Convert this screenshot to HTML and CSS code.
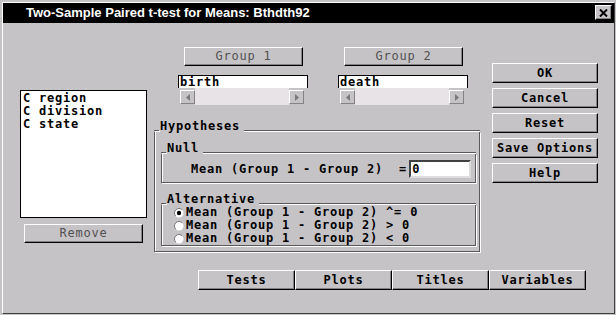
FILE: index.html
```html
<!DOCTYPE html>
<html>
<head>
<meta charset="utf-8">
<title>Two-Sample Paired t-test for Means: Bthdth92</title>
<link rel="stylesheet" href="styles.css">
</head>
<body>
<div class="window">
  <div class="frame">
    <div class="titlebar">
      <span class="title">Two-Sample Paired t-test for Means: Bthdth92</span>
      <span class="close"><svg width="9" height="8" viewBox="0 0 9 8"><path d="M1 0.5 L8 7.5 M8 0.5 L1 7.5" stroke="#000" stroke-width="2"/></svg></span>
    </div>
    <div class="content">
      <div class="main">
        <div class="leftcol">
          <div class="listbox">
            <div class="item">C region</div>
            <div class="item">C division</div>
            <div class="item">C state</div>
          </div>
          <div class="btn disabled remove">Remove</div>
        </div>

        <div class="midcol">
          <div class="pickers">
            <div class="picker">
              <div class="btn disabled groupbtn">Group 1</div>
              <div class="field">birth</div>
              <div class="hscroll">
                <span class="sarrow"><svg width="4" height="7" viewBox="0 0 4 7"><path d="M4 0 L0 3.5 L4 7Z" fill="#7b797b"/></svg></span>
                <span class="track"></span>
                <span class="sarrow"><svg width="4" height="7" viewBox="0 0 4 7"><path d="M0 0 L4 3.5 L0 7Z" fill="#7b797b"/></svg></span>
              </div>
            </div>
            <div class="picker">
              <div class="btn disabled groupbtn">Group 2</div>
              <div class="field">death</div>
              <div class="hscroll">
                <span class="sarrow"><svg width="4" height="7" viewBox="0 0 4 7"><path d="M4 0 L0 3.5 L4 7Z" fill="#7b797b"/></svg></span>
                <span class="track"></span>
                <span class="sarrow"><svg width="4" height="7" viewBox="0 0 4 7"><path d="M0 0 L4 3.5 L0 7Z" fill="#7b797b"/></svg></span>
              </div>
            </div>
          </div>

          <div class="group hyp">
            <div class="ghead"><span class="glabel">Hypotheses</span></div>
            <div class="gbody hyp-body">
              <div class="group sub null">
                <div class="ghead"><span class="glabel">Null</span></div>
                <div class="gbody null-body">
                  <span class="nulltext">Mean (Group 1 - Group 2)  =</span>
                  <span class="nullinput">0</span>
                </div>
              </div>
              <div class="group sub alt">
                <div class="ghead"><span class="glabel">Alternative</span></div>
                <div class="gbody alt-body">
                  <div class="radio-row">
                    <svg class="radio" width="10" height="10" viewBox="0 0 10 10"><circle cx="5" cy="5" r="4.5" fill="#fff"/><path d="M1.8 8.2 A4.5 4.5 0 0 1 8.2 1.8" stroke="#7b797b" fill="none"/><circle cx="5" cy="5" r="2.2" fill="#000"/></svg>
                    <span>Mean (Group 1 - Group 2) ^= 0</span>
                  </div>
                  <div class="radio-row">
                    <svg class="radio" width="10" height="10" viewBox="0 0 10 10"><circle cx="5" cy="5" r="4.5" fill="#fff"/><path d="M1.8 8.2 A4.5 4.5 0 0 1 8.2 1.8" stroke="#7b797b" fill="none"/></svg>
                    <span>Mean (Group 1 - Group 2) &gt; 0</span>
                  </div>
                  <div class="radio-row">
                    <svg class="radio" width="10" height="10" viewBox="0 0 10 10"><circle cx="5" cy="5" r="4.5" fill="#fff"/><path d="M1.8 8.2 A4.5 4.5 0 0 1 8.2 1.8" stroke="#7b797b" fill="none"/></svg>
                    <span>Mean (Group 1 - Group 2) &lt; 0</span>
                  </div>
                </div>
              </div>
            </div>
          </div>
        </div>

        <div class="rightcol">
          <div class="btn">OK</div>
          <div class="btn">Cancel</div>
          <div class="btn">Reset</div>
          <div class="btn">Save Options</div>
          <div class="btn">Help</div>
        </div>
      </div>

      <div class="bottombar">
        <div class="btn">Tests</div>
        <div class="btn">Plots</div>
        <div class="btn">Titles</div>
        <div class="btn">Variables</div>
      </div>
    </div>
  </div>
</div>
</body>
</html>
```

FILE: styles.css
```css
html, body {
  margin: 0;
  padding: 0;
  background: #c6c3c6;
}

.window {
  width: 616px;
  height: 315px;
  box-sizing: border-box;
  padding: 2px 1px 1px 2px;
  background: #c6c3c6;
  display: flex;
}

.frame {
  flex: 1;
  display: flex;
  flex-direction: column;
  border-top: 1px solid #ffffff;
  border-left: 1px solid #ffffff;
  border-right: 1px solid #424142;
  border-bottom: 1px solid #424142;
}

.titlebar {
  height: 20px;
  flex: none;
  background: #000;
  color: #fff;
  display: flex;
  align-items: flex-start;
  justify-content: space-between;
}

.title {
  margin-left: 23px;
  font: bold 13px/20px "Liberation Sans Narrow", "Liberation Sans", sans-serif;
  white-space: pre;
}

.close {
  width: 17px;
  height: 15px;
  margin: 2px 2px 0 0;
  box-sizing: border-box;
  background: #c6c3c6;
  border: 1px solid;
  border-color: #fff #000 #000 #fff;
  box-shadow: inset -1px -1px 0 #848284;
  display: flex;
  align-items: center;
  justify-content: center;
}

.content {
  flex: 1;
  display: flex;
  flex-direction: column;
  font: bold 12px/13px "DejaVu Sans Mono", monospace;
  letter-spacing: 0.78px;
  color: #000;
}

.main {
  display: flex;
  align-items: flex-start;
}

/* generic 3D button */
.btn {
  box-sizing: border-box;
  height: 20px;
  background: #c6c3c6;
  border-top: 1px solid #ffffff;
  border-left: 1px solid #ffffff;
  border-right: 1px solid #000;
  border-bottom: 1px solid #000;
  box-shadow: inset -1px -1px 0 #848284;
  display: flex;
  align-items: center;
  justify-content: center;
  white-space: pre;
}

.btn.disabled {
  color: #525152;
  font-weight: normal;
}

/* left column */
.leftcol {
  width: 127px;
  margin-left: 17px;
  display: flex;
  flex-direction: column;
}

.listbox {
  margin-top: 67px;
  height: 128px;
  box-sizing: border-box;
  background: #fff;
  border: 1px solid #000;
  padding: 1px 2px;
}

.item {
  height: 13px;
  white-space: pre;
}

.remove {
  margin: 6px 0 0 4px;
  width: 119px;
  height: 19px;
}

/* middle column */
.midcol {
  width: 326px;
  margin-left: 7px;
  display: flex;
  flex-direction: column;
}

.pickers {
  display: flex;
  gap: 30px;
  margin-top: 24px;
  padding-left: 24px;
}

.picker {
  width: 130px;
  display: flex;
  flex-direction: column;
}

.groupbtn {
  margin-left: 6px;
  width: 119px;
  height: 19px;
}

.field {
  margin-top: 9px;
  height: 13px;
  box-sizing: border-box;
  background: #fff;
  border: 1px solid #000;
  border-bottom: none;
  padding-left: 1px;
  line-height: 12px;
}

.hscroll {
  height: 17px;
  box-sizing: border-box;
  padding: 2px 4px 1px 2px;
  display: flex;
  align-items: stretch;
  background: #c6c3c6;
}

.sarrow {
  width: 15px;
  box-sizing: border-box;
  background: #c6c3c6;
  border-top: 1px solid #fff;
  border-left: 1px solid #fff;
  border-right: 1px solid #848284;
  border-bottom: 1px solid #848284;
  display: flex;
  align-items: center;
  justify-content: center;
}

.track {
  flex: 1;
  background: #e7e3e7;
  margin: -2px 0 -1px 0;
}

/* group frames */
.group {
  display: flex;
  flex-direction: column;
}

.hyp {
  margin-top: 15px;
}

.ghead {
  height: 12px;
  display: flex;
  align-items: flex-end;
}

.ghead::before {
  content: "";
  width: 5px;
  height: 1px;
  margin-bottom: 1px;
  background: #5a595a;
  box-shadow: 1px 1px 0 #fff;
  margin-right: 1px;
}

.ghead::after {
  content: "";
  flex: 1;
  height: 1px;
  margin-bottom: 1px;
  margin-left: 4px;
  background: #5a595a;
  box-shadow: 0 1px 0 #fff;
}

.glabel {
  line-height: 12px;
  white-space: pre;
}

.gbody {
  border: 1px solid #5a595a;
  border-top: none;
  box-shadow: inset 1px 0 0 #fff, 1px 1px 0 #fff;
}

.hyp-body {
  padding: 10px 0 5px 0;
  display: flex;
  flex-direction: column;
}

.sub {
  margin: 0 3px 0 6px;
}

.alt {
  margin-top: 10px;
}

.null-body {
  display: flex;
  align-items: center;
  padding: 6px 3px 4px 29px;
}

.nulltext {
  white-space: pre;
}

.nullinput {
  margin-left: 2px;
  width: 62px;
  height: 18px;
  box-sizing: border-box;
  background: #fff;
  border: 2px solid;
  border-color: #424142 #dedbde #dedbde #424142;
  padding-left: 1px;
  line-height: 14px;
}

.alt-body {
  padding: 1px 0 0 12px;
  display: flex;
  flex-direction: column;
}

.radio-row {
  height: 13px;
  display: flex;
  align-items: center;
  white-space: pre;
}

.radio {
  margin-right: 2px;
  flex: none;
}

/* right column */
.rightcol {
  width: 106px;
  margin-left: 12px;
  margin-top: 40px;
  display: flex;
  flex-direction: column;
  gap: 5px;
}

/* bottom bar */
.bottombar {
  display: flex;
  margin: 18px 0 0 195px;
}

.bottombar .btn {
  width: 97px;
}
```
